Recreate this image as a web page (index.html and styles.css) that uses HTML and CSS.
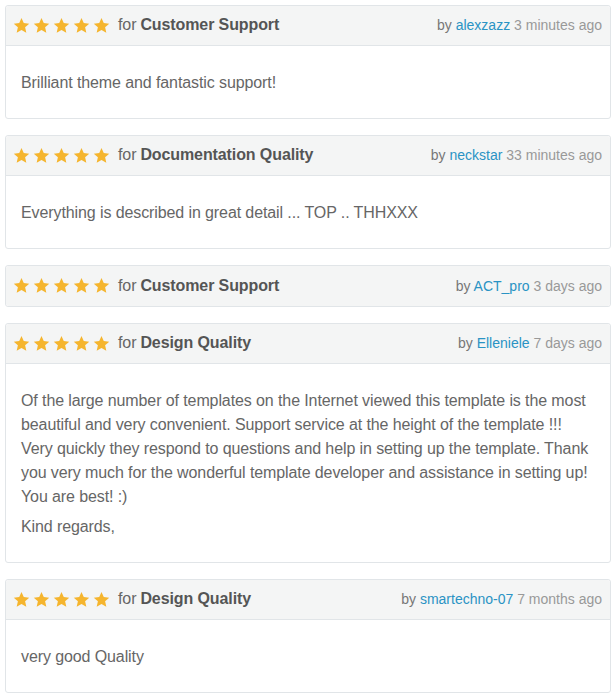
FILE: index.html
```html
<!DOCTYPE html>
<html lang="en">
<head>
    <meta charset="UTF-8">
    <meta name="viewport" content="width=device-width, initial-scale=1.0">
    <title>Reviews</title>
    <link rel="stylesheet" href="styles.css">
</head>
<body>
    <svg width="0" height="0" class="defs">
        <symbol id="star" viewBox="0 0 24 24">
            <path d="M12 1.5l3.2 7.1 7.7.8-5.8 5.2 1.7 7.6L12 18.3l-6.8 3.9 1.7-7.6-5.8-5.2 7.7-.8z"/>
        </symbol>
    </svg>

    <div class="reviews">
        <div class="review">
            <div class="review-head">
                <div class="rating">
                    <span class="stars">
                        <svg><use href="#star"/></svg><svg><use href="#star"/></svg><svg><use href="#star"/></svg><svg><use href="#star"/></svg><svg><use href="#star"/></svg>
                    </span>
                    for <b>Customer Support</b>
                </div>
                <div class="meta">by <a href="#">alexzazz</a> <span class="time">3 minutes ago</span></div>
            </div>
            <div class="review-body">
                <p>Brilliant theme and fantastic support!</p>
            </div>
        </div>

        <div class="review">
            <div class="review-head">
                <div class="rating">
                    <span class="stars">
                        <svg><use href="#star"/></svg><svg><use href="#star"/></svg><svg><use href="#star"/></svg><svg><use href="#star"/></svg><svg><use href="#star"/></svg>
                    </span>
                    for <b>Documentation Quality</b>
                </div>
                <div class="meta">by <a href="#">neckstar</a> <span class="time">33 minutes ago</span></div>
            </div>
            <div class="review-body">
                <p>Everything is described in great detail ... TOP .. THHXXX</p>
            </div>
        </div>

        <div class="review">
            <div class="review-head no-body">
                <div class="rating">
                    <span class="stars">
                        <svg><use href="#star"/></svg><svg><use href="#star"/></svg><svg><use href="#star"/></svg><svg><use href="#star"/></svg><svg><use href="#star"/></svg>
                    </span>
                    for <b>Customer Support</b>
                </div>
                <div class="meta">by <a href="#">ACT_pro</a> <span class="time">3 days ago</span></div>
            </div>
        </div>

        <div class="review">
            <div class="review-head">
                <div class="rating">
                    <span class="stars">
                        <svg><use href="#star"/></svg><svg><use href="#star"/></svg><svg><use href="#star"/></svg><svg><use href="#star"/></svg><svg><use href="#star"/></svg>
                    </span>
                    for <b>Design Quality</b>
                </div>
                <div class="meta">by <a href="#">Elleniele</a> <span class="time">7 days ago</span></div>
            </div>
            <div class="review-body">
                <p>Of the large number of templates on the Internet viewed this template is the most beautiful and very convenient. Support service at the height of the template !!! Very quickly they respond to questions and help in setting up the template. Thank you very much for the wonderful template developer and assistance in setting up! You are best! :)</p>
                <p>Kind regards,</p>
            </div>
        </div>

        <div class="review">
            <div class="review-head">
                <div class="rating">
                    <span class="stars">
                        <svg><use href="#star"/></svg><svg><use href="#star"/></svg><svg><use href="#star"/></svg><svg><use href="#star"/></svg><svg><use href="#star"/></svg>
                    </span>
                    for <b>Design Quality</b>
                </div>
                <div class="meta">by <a href="#">smartechno-07</a> <span class="time">7 months ago</span></div>
            </div>
            <div class="review-body">
                <p>very good Quality</p>
            </div>
        </div>
    </div>
</body>
</html>
```

FILE: styles.css
```css
body {
    margin: 0;
    background: #fff;
    font-family: "Liberation Sans", Arial, sans-serif;
    color: #555;
}

.defs {
    position: absolute;
}

.reviews {
    display: flex;
    flex-direction: column;
    gap: 16px;
    padding: 5px 5px 0 5px;
}

.review {
    border: 1px solid #e1e5e8;
    border-radius: 3px;
    background: #fff;
}

.review-head {
    display: flex;
    justify-content: space-between;
    align-items: center;
    height: 40px;
    padding: 0 7px 1px 7px;
    box-sizing: border-box;
    height: 40px;
    background: #f4f5f5;
    border-bottom: 1px solid #e1e5e8;
    border-radius: 3px 3px 0 0;
}

.review-head.no-body {
    border-bottom: none;
    border-radius: 3px;
}

.rating {
    display: flex;
    align-items: center;
    font-size: 16px;
    letter-spacing: -0.1px;
    color: #666;
}

.rating b {
    margin-left: 4px;
    color: #555;
}

.stars {
    display: flex;
    gap: 3px;
    margin-right: 8px;
}

.stars svg {
    width: 17px;
    height: 17px;
    fill: #f5b52e;
}

.meta {
    font-size: 14px;
    color: #777;
    padding-right: 1px;
}

.meta a {
    color: #2a93c4;
    text-decoration: none;
}

.time {
    color: #999;
}

.review-body {
    padding: 25px 15px 23px;
}

.review-body p {
    margin: 0 0 6px;
    font-size: 16px;
    line-height: 24px;
    letter-spacing: -0.1px;
    color: #666;
}

.review-body p:last-child {
    margin-bottom: 0;
}
```
